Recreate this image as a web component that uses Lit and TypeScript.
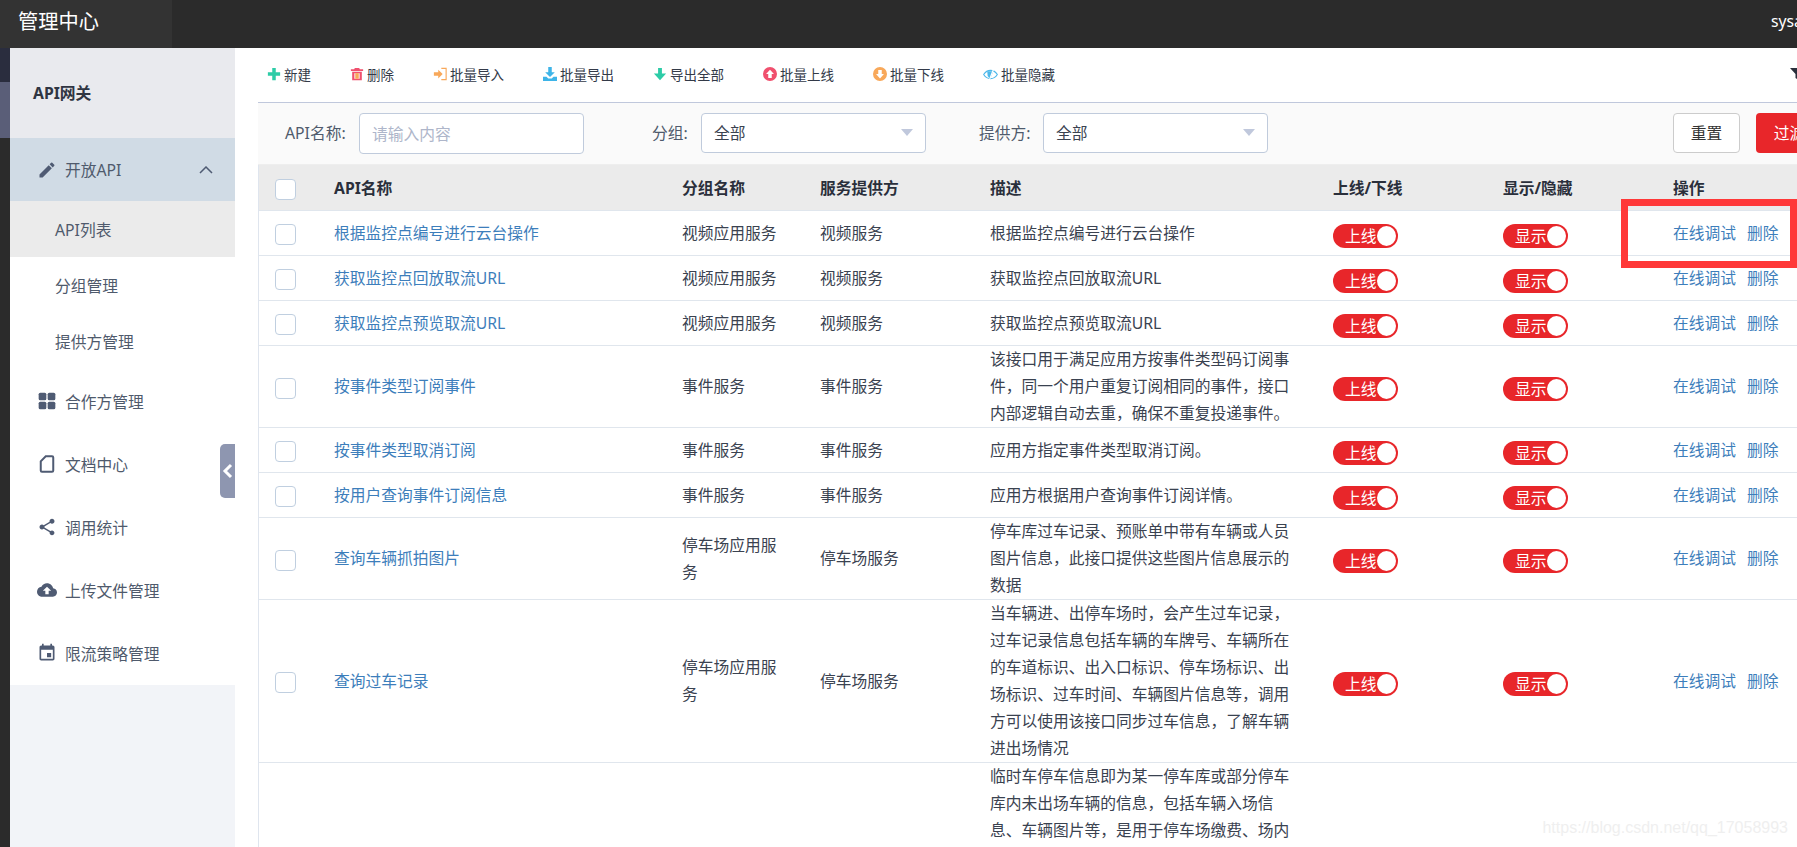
import { LitElement, html, css, svg } from "lit";
import { customElement } from "lit/decorators.js";

const side: Record<string, unknown> = {
  edit: svg`<path d="M3 17.25V21h3.75L17.81 9.94l-3.75-3.75L3 17.25zM20.71 7.04a1 1 0 0 0 0-1.41l-2.34-2.34a1 1 0 0 0-1.41 0l-1.83 1.83 3.75 3.75 1.83-1.83z"/>`,
  grid: svg`<rect x="2" y="2" width="9.2" height="9.2" rx="2"/><rect x="12.8" y="2" width="9.2" height="9.2" rx="2"/><rect x="2" y="12.8" width="9.2" height="9.2" rx="2"/><rect x="12.8" y="12.8" width="9.2" height="9.2" rx="2"/>`,
  file: svg`<path d="M10.500 2.800h7.500a1.500 1.500 0 0 1 1.500 1.500v15.400a1.500 1.500 0 0 1-1.500 1.500H6a1.500 1.500 0 0 1-1.500-1.500V8.800z" fill="none" stroke="currentColor" stroke-width="2.400"/>`,
  share: svg`<path d="M18 16.080c-.76 0-1.440.3-1.960.77L8.910 12.700c.05-.23.09-.46.09-.7s-.04-.47-.09-.7l7.050-4.110c.54.5 1.250.81 2.040.81 1.660 0 3-1.340 3-3s-1.340-3-3-3-3 1.340-3 3c0 .24.04.47.09.7L8.040 9.810C7.500 9.310 6.790 9 6 9c-1.660 0-3 1.340-3 3s1.340 3 3 3c.79 0 1.500-.31 2.040-.81l7.120 4.160c-.05.21-.08.43-.08.65 0 1.610 1.310 2.920 2.920 2.920s2.920-1.310 2.920-2.920-1.310-2.920-2.920-2.920z"/>`,
  cloud: svg`<path d="M19.350 10.040C18.670 6.590 15.640 4 12 4 9.110 4 6.600 5.640 5.350 8.040 2.340 8.360 0 10.910 0 14c0 3.310 2.690 6 6 6h13c2.760 0 5-2.240 5-5 0-2.640-2.050-4.780-4.650-4.960zM14 13v4h-4v-4H7l5-5 5 5h-3z"/>`,
  cal: svg`<path d="M17 12h-5v5h5v-5zM16 1v2H8V1H6v2H5c-1.110 0-1.990.9-1.990 2L3 19c0 1.100.89 2 2 2h14c1.100 0 2-.9 2-2V5c0-1.100-.9-2-2-2h-1V1h-2zm3 18H5V8h14v11z"/>`,
};

const tools: { label: string; color: string; wide?: boolean; icon: unknown }[] = [
  { label: "新建", color: "#2dcca7", icon: svg`<path d="M6 1h4v5h5v4h-5v5H6v-5H1V6h5z"/>` },
  { label: "删除", color: "#f0506e", icon: svg`<path d="M5.500 1h5l.7 1.500H15V4.500H1V2.500h3.800z"/><path fill-rule="evenodd" d="M2.500 5.500h11V15h-11zM5 7v6.500h6V7z"/><rect x="6" y="7" width="4" height="6.500" fill="#f8a85a"/>` },
  { label: "批量导入", color: "#f8a85a", icon: svg`<path d="M1 6h5V3l5 5-5 5v-3H1z"/><path d="M9.500 1.500H15v13H9.500" fill="none" stroke="#f8a85a" stroke-width="1.300"/>` },
  { label: "批量导出", color: "#3db4e8", icon: svg`<path d="M6 0h4v6h3.500L8 11.500 2.500 6H6z"/><path d="M0 11h4l2 2h4l2-2h4v5H0z"/>` },
  { label: "导出全部", color: "#2dcca7", icon: svg`<path d="M5.800 1h4.400v6.500H15L8 15 1 7.500h4.800z"/>` },
  { label: "批量上线", color: "#f0506e", icon: svg`<path fill-rule="evenodd" d="M8 0a8 8 0 1 1 0 16A8 8 0 0 1 8 0zm0 3L3.500 8H6v4.500h4V8h2.500z"/>` },
  { label: "批量下线", color: "#f8a85a", icon: svg`<path fill-rule="evenodd" d="M8 0a8 8 0 1 1 0 16A8 8 0 0 1 8 0zm0 13 4.500-5H10V3.500H6V8H3.500z"/>` },
  { label: "批量隐藏", color: "#4db8ea", wide: true, icon: svg`<path d="M.7 8C2.500 5.200 5 3.600 8 3.600s5.500 1.600 7.300 4.400c-1.800 2.800-4.300 4.400-7.300 4.400S2.500 10.800.7 8z" fill="none" stroke="#4db8ea" stroke-width="1.200"/><path d="M4.500 4.500h6.500L7.500 13 5 9.500z"/><path d="M11.500 1.500 6.500 14.500" stroke="#fff" stroke-width="1.300"/>` },
];

const c = "\uFF0C";

const rows: { name?: string; group?: string; provider?: string; desc: string; tall?: boolean }[] = [
  { name: "根据监控点编号进行云台操作", group: "视频应用服务", provider: "视频服务", desc: "根据监控点编号进行云台操作" },
  { name: "获取监控点回放取流URL", group: "视频应用服务", provider: "视频服务", desc: "获取监控点回放取流URL" },
  { name: "获取监控点预览取流URL", group: "视频应用服务", provider: "视频服务", desc: "获取监控点预览取流URL" },
  { name: "按事件类型订阅事件", group: "事件服务", provider: "事件服务", desc: `该接口用于满足应用方按事件类型码订阅事件${c}同一个用户重复订阅相同的事件${c}接口内部逻辑自动去重${c}确保不重复投递事件。` },
  { name: "按事件类型取消订阅", group: "事件服务", provider: "事件服务", desc: "应用方指定事件类型取消订阅。" },
  { name: "按用户查询事件订阅信息", group: "事件服务", provider: "事件服务", desc: "应用方根据用户查询事件订阅详情。" },
  { name: "查询车辆抓拍图片", group: "停车场应用服务", provider: "停车场服务", desc: `停车库过车记录、预账单中带有车辆或人员图片信息${c}此接口提供这些图片信息展示的数据` },
  { name: "查询过车记录", group: "停车场应用服务", provider: "停车场服务", desc: `当车辆进、出停车场时${c}会产生过车记录${c}过车记录信息包括车辆的车牌号、车辆所在的车道标识、出入口标识、停车场标识、出场标识、过车时间、车辆图片信息等${c}调用方可以使用该接口同步过车信息${c}了解车辆进出场情况` },
  { desc: `临时车停车信息即为某一停车库或部分停车库内未出场车辆的信息${c}包括车辆入场信息、车辆图片等${c}是用于停车场缴费、场内`, tall: true },
];

@customElement("app-root")
export class AppRoot extends LitElement {
  static styles = css`
    :host { display: block; width: 100vw; height: 100vh; overflow: hidden; position: relative; background: #fff;
      font-family: "Noto Sans", "Noto Sans CJK SC", sans-serif; font-size: 15.75px; color: #3a4250; }
    * { box-sizing: border-box; }
    .top { height: 48px; background: #2b2b2b; display: flex; align-items: center; justify-content: space-between; color: #fff; }
    .logo { width: 172px; height: 100%; background: #333; font-size: 20.25px; padding-left: 18px; line-height: 43px; }
    .user { width: 70px; margin-right: -44px; white-space: nowrap; font-size: 15.75px; margin-bottom: 6px; }
    .body { display: flex; height: 799px; }
    .strip { width: 10px; background: #2b2b2b; flex: none; }
    .strip div:nth-child(1) { height: 34px; background: #2a2d3e; }
    .strip div:nth-child(2) { height: 56px; background: #5a5e78; }
    .side { width: 225px; flex: none; background: #f2f4f8; position: relative; }
    .brand { height: 90px; background: #e9eaee; display: flex; align-items: center; padding: 0 0 2px 23px; font-weight: 700; color: #2f3542; }
    .item { height: 63px; display: flex; align-items: center; background: #fff; padding-left: 27px; color: #4f5a6c; }
    .item svg { width: 20px; height: 20px; fill: #4f5b73; color: #4f5b73; margin-right: 8px; flex: none; }
    .item.open { background: #d0dbe5; padding-right: 22px; }
    .item.open span { flex: 1; }
    .item.open svg.chev { width: 14px; height: 8px; margin: 0; fill: none; stroke: #4f5b73; stroke-width: 1.500; }
    .sub { height: 56.250px; display: flex; align-items: center; background: #fff; padding-left: 45px; color: #4f5a6c; }
    .sub.on { background: #ebebeb; }
    .handle { position: absolute; right: 0; top: 396px; width: 15px; height: 54px; background: #8e96b0; border-radius: 5px 0 0 5px;
      display: flex; align-items: center; justify-content: center; }
    .handle svg { width: 11px; height: 16px; fill: none; stroke: #fff; stroke-width: 3; }
    .main { margin-left: 23px; width: 1570px; flex: none; }
    .toolbar { height: 55px; border-bottom: 1px solid #c0c8dc; display: flex; align-items: center; gap: 39px; padding: 0 24px 2px 9px;
      font-size: 13.500px; color: #333a48; }
    .tool { display: flex; align-items: center; gap: 3px; white-space: nowrap; }
    .tool svg { width: 14px; height: 14px; flex: none; }
    .tool.wide svg { width: 15px; height: 15px; }
    .funnel { margin-left: auto; width: 14px; height: 12px; fill: #2a2f3b; }
    .filter { height: 62px; background: #fafafa; display: flex; align-items: center; padding: 0 0 2px 27px; border-bottom: 1px solid #eee; }
    .lbl { flex: none; color: #4f5a6c; }
    .l1 { width: 74px; } .l2 { width: 49px; margin-left: 68px; } .l3 { width: 64px; margin-left: 53px; }
    .field { height: 40px; background: #fff; border: 1px solid #c0cbdc; border-radius: 4px; display: flex; align-items: center; flex: none;
      padding: 0 12px; position: relative; }
    .input { width: 225px; height: 41px; margin-top: 2px; color: #aeb6ca; }
    .select { width: 225px; color: #3a4250; justify-content: space-between; }
    .select i { width: 0; height: 0; border: 6.500px solid transparent; border-top: 7px solid #c0c8dc; border-bottom: 0; }
    .btn { width: 67px; height: 40px; flex: none; border-radius: 4px; display: flex; align-items: center; justify-content: center; white-space: nowrap; }
    .reset { margin-left: 405px; background: #fff; border: 1px solid #ccc; color: #333; }
    .go { margin-left: 16px; background: #e8262a; color: #fff; }
    table { width: 100%; table-layout: fixed; border-collapse: separate; border-spacing: 0; border-left: 1px solid #dfe5ee; line-height: 27px; }
    th { height: 46px; background: #ebebeb; text-align: left; padding: 2px 16px 0; font-weight: 700; color: #2a2f3b; border-bottom: 1px solid #e0e6ed; }
    td { height: 45px; padding: 0 16px; border-bottom: 1px solid #e0e6ed; vertical-align: middle; color: #3a4250; }
    tr.tall td { height: 240px; vertical-align: top; }
    .check { display: block; width: 21px; height: 21px; border: 1px solid #c0cfe0; border-radius: 4px; background: #fff; margin-top: 3px; }
    th .check { margin-top: 1px; }
    .link { color: #3d7ebb; }
    .ops .link + .link { margin-left: 11px; }
    .toggle { display: flex; align-items: center; justify-content: space-between; width: 65px; height: 24px; margin-top: 5px; border-radius: 12px;
      background: #e8262a; color: #fff; padding: 0 3px 0 12px; line-height: 24px; white-space: nowrap; }
    .toggle i { width: 19px; height: 20px; border-radius: 50%; background: #fff; flex: none; }
    .mark { position: absolute; right: 0; top: 199px; width: 176px; height: 69px; border: 7px solid #ff3838; }
    .water { position: absolute; right: 9px; top: 819px; font-family: "Liberation Sans", sans-serif; font-size: 16px; color: #efefef; }
  `;

  private icon(name: string) {
    return html`<svg viewBox="0 0 24 24">${side[name]}</svg>`;
  }

  render() {
    return html`
      <div class="top"><div class="logo">管理中心</div><div class="user">sysadmin</div></div>
      <div class="body">
        <div class="strip"><div></div><div></div></div>
        <nav class="side">
          <div class="brand">API网关</div>
          <div class="item open">${this.icon("edit")}<span>开放API</span>
            <svg class="chev" viewBox="0 0 14 8"><path d="M1 7l6-6 6 6"/></svg></div>
          <div class="sub on">API列表</div>
          <div class="sub">分组管理</div>
          <div class="sub">提供方管理</div>
          <div class="item">${this.icon("grid")}合作方管理</div>
          <div class="item">${this.icon("file")}文档中心</div>
          <div class="item">${this.icon("share")}调用统计</div>
          <div class="item">${this.icon("cloud")}上传文件管理</div>
          <div class="item">${this.icon("cal")}限流策略管理</div>
          <div class="handle"><svg viewBox="0 0 11 16"><path d="M9 2L3 8l6 6"/></svg></div>
        </nav>
        <main class="main">
          <div class="toolbar">
            ${tools.map(
              (t) => html`<div class="tool ${t.wide ? "wide" : ""}">
                <svg viewBox="0 0 16 16" style="fill:${t.color}">${t.icon}</svg>${t.label}</div>`
            )}
            <svg class="funnel" viewBox="0 0 14 12"><path d="M0 0h14L8.500 6v6l-3-2V6z"/></svg>
          </div>
          <div class="filter">
            <span class="lbl l1">API名称:</span><div class="field input">请输入内容</div>
            <span class="lbl l2">分组:</span><div class="field select">全部<i></i></div>
            <span class="lbl l3">提供方:</span><div class="field select">全部<i></i></div>
            <div class="btn reset">重置</div><div class="btn go">过滤</div>
          </div>
          <table>
            <colgroup>
              <col style="width:59px" /><col style="width:348px" /><col style="width:138px" /><col style="width:170px" />
              <col style="width:343px" /><col style="width:170px" /><col style="width:170px" /><col />
            </colgroup>
            <thead><tr>
              <th><span class="check"></span></th><th>API名称</th><th>分组名称</th><th>服务提供方</th><th>描述</th>
              <th>上线/下线</th><th>显示/隐藏</th><th>操作</th>
            </tr></thead>
            <tbody>
              ${rows.map((r) =>
                r.tall
                  ? html`<tr class="tall"><td></td><td></td><td></td><td></td><td>${r.desc}</td><td></td><td></td><td></td></tr>`
                  : html`<tr>
                      <td><span class="check"></span></td>
                      <td class="link">${r.name}</td>
                      <td>${r.group}</td>
                      <td>${r.provider}</td>
                      <td>${r.desc}</td>
                      <td><div class="toggle">上线<i></i></div></td>
                      <td><div class="toggle">显示<i></i></div></td>
                      <td class="ops"><span class="link">在线调试</span><span class="link">删除</span></td>
                    </tr>`
              )}
            </tbody>
          </table>
        </main>
      </div>
      <div class="mark"></div>
      <div class="water">https://blog.csdn.net/qq_17058993</div>
    `;
  }
}
